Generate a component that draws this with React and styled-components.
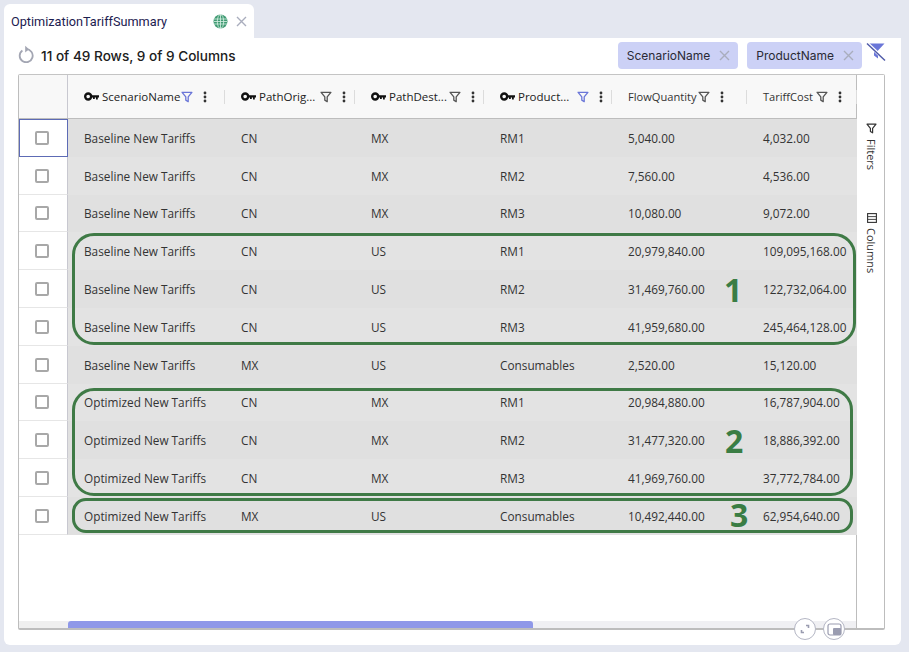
import React from "react";
import styled, { createGlobalStyle } from "styled-components";

const Global = createGlobalStyle`
    html, body {
        margin: 0;
        padding: 0;
        background: #e4e7f0;
    }
    * {
        box-sizing: border-box;
    }
`;

const Page = styled.div`
    width: 909px;
    height: 652px;
    padding: 4px 8px 7px 4px;
    display: flex;
    flex-direction: column;
    overflow: hidden;
    font-family: "Open Sans", sans-serif;
`;

const TabBar = styled.div`
    display: flex;
    height: 34px;
`;

const Tab = styled.div`
    width: 250px;
    background: #fff;
    border-radius: 6px 6px 0 0;
    display: flex;
    align-items: center;
    padding: 0 7px;
    font-family: Roboto, sans-serif;
    font-size: 12.7px;
    color: #1c2050;
`;

const TabTitle = styled.span`
    flex: 1;
`;

const TabClose = styled.span`
    display: flex;
    margin-left: 8px;
`;

const Panel = styled.div`
    flex: 1;
    background: #fff;
    border-radius: 0 0 6px 6px;
    padding: 0 16px 15px 14px;
    display: flex;
    flex-direction: column;
`;

const Toolbar = styled.div`
    height: 36px;
    padding-bottom: 1px;
    display: flex;
    align-items: center;
`;

const RefreshIcon = styled.span`
    display: flex;
    margin-top: -4px;
`;

const RowCount = styled.span`
    font-family: Inter, sans-serif;
    font-weight: 500;
    font-size: 13.6px;
    color: #202020;
    margin-left: 7px;
    flex: 1;
`;

const Chip = styled.div`
    height: 27px;
    margin-right: 9px;
    padding: 0 8px 0 9px;
    border-radius: 4px;
    background: #ccd1f6;
    display: flex;
    align-items: center;
    gap: 9px;
    font-family: Inter, sans-serif;
    font-size: 12px;
    color: #2a2a35;
`;

const ClearFilter = styled.span`
    display: flex;
    margin: -7px -1px 0 -5px;
`;

const Grid = styled.div`
    position: relative;
    flex: 1;
    display: flex;
    border: 1px solid #bdbdbd;
    border-top-color: #c4c4c4;
    border-bottom-width: 2px;
    border-radius: 2px;
`;

const Main = styled.div`
    position: relative;
    flex: 1;
    display: flex;
    flex-direction: column;
    min-width: 0;
`;

const HeaderRow = styled.div`
    display: grid;
    grid-template-columns: ${(p) => p.$cols};
    height: 44px;
    flex: none;
    background: #f8f8f8;
    border-bottom: 1px solid #bdbdbd;
`;

const CornerCell = styled.div`
    border-right: 1px solid #c8c8d0;
`;

const HeaderCell = styled.div`
    display: flex;
    align-items: center;
    padding-left: 16px;
    position: relative;
    font-family: "Open Sans", sans-serif;
    font-size: ${(p) => (p.$keyed ? "11.5px" : "11.1px")};
    font-weight: ${(p) => (p.$keyed ? 500 : 400)};
    color: ${(p) => (p.$keyed ? "#222" : "#333")};
    white-space: nowrap;
`;

const HeaderLabel = styled.span`
    margin-left: ${(p) => (p.$keyed ? "3px" : "0")};
    width: ${(p) => p.$w}px;
    flex: none;
`;

const HeaderIcon = styled.span`
    display: flex;
    flex: none;
    margin-left: ${(p) => p.$gap || 0}px;
`;

const Resize = styled.span`
    position: absolute;
    right: 0;
    top: 15px;
    height: 14px;
    width: 1px;
    background: #dcdcdc;
`;

const Row = styled.div`
    display: grid;
    grid-template-columns: ${(p) => p.$cols};
    height: 37.8px;
    flex: none;
`;

const CheckCell = styled.div`
    display: flex;
    align-items: center;
    justify-content: center;
    padding: 1px 2px 0 0;
    border-right: 1px solid #c8c8d0;
    border-bottom: 1px solid #e6e6e6;
    background: #fff;
    outline: ${(p) => (p.$focus ? "1px solid #5d6bb5" : "none")};
    outline-offset: -1px;
`;

const Check = styled.span`
    width: 14px;
    height: 14px;
    border: 2px solid #a8a8a8;
    border-radius: 2px;
    background: #fff;
`;

const Cell = styled.div`
    display: flex;
    align-items: center;
    padding-left: 16px;
    background: ${(p) => (p.$odd ? "#e3e3e3" : "#e0e0e0")};
    font-size: 11.8px;
    color: #333;
    white-space: nowrap;
`;

const Spacer = styled.div`
    flex: 1;
`;

const ScrollBar = styled.div`
    height: 7px;
    flex: none;
    display: flex;
    background: #f0f0f3;
`;

const ScrollPin = styled.div`
    width: 49px;
    background: #efefef;
`;

const ScrollThumb = styled.div`
    width: 465px;
    background: #8f98e8;
    border-radius: 3px 3px 0 0;
`;

const SidePanel = styled.div`
    width: 28px;
    border-left: 1px solid #bdbdbd;
    background: #fff;
    display: flex;
    flex-direction: column;
    align-items: center;
    padding: 48px 0 0 2px;
    gap: 43px;
`;

const SideButton = styled.div`
    writing-mode: vertical-rl;
    display: flex;
    align-items: center;
    gap: 5px;
    font-size: 11px;
    color: #333;
`;

const Callout = styled.div`
    position: absolute;
    left: ${(p) => p.$x}px;
    top: ${(p) => p.$y}px;
    width: ${(p) => p.$w}px;
    height: ${(p) => p.$h}px;
    border: 3px solid #3f7a46;
    border-radius: ${(p) => p.$r}px;
    pointer-events: none;
`;

const CalloutNumber = styled.span`
    position: absolute;
    left: ${(p) => p.$x}px;
    top: ${(p) => p.$y}px;
    font-family: "Open Sans", sans-serif;
    font-weight: 700;
    font-size: 32px;
    line-height: 36px;
    color: #3a7d44;
`;

const RoundButton = styled.span`
    position: absolute;
    left: ${(p) => p.$x}px;
    top: 543px;
    width: 22px;
    height: 22px;
    border-radius: 50%;
    border: 1.5px solid #b4b6c4;
    background: #fff;
    display: flex;
    align-items: center;
    justify-content: center;
`;

const Key = () => (
    <svg width="15" height="9" viewBox="0 0 15 9">
        <circle cx="4.2" cy="4.5" r="3" fill="none" stroke="#111" strokeWidth="2.4" />
        <path d="M7 3.3h8v2.2h-1.2v2h-1.8v-2h-1.2v1.5H9V5.5H7z" fill="#111" />
    </svg>
);

const Funnel = ({ color = "#555", size = 12 }) => (
    <svg width={size} height={size} viewBox="0 0 11 11">
        <path d="M1 1.2h9L6.6 5.4v4.4L4.4 8.4v-3z" fill="none" stroke={color} strokeWidth="1.2" strokeLinejoin="round" />
    </svg>
);

const Dots = () => (
    <svg width="4" height="12" viewBox="0 0 4 12">
        <circle cx="2" cy="2" r="1.4" fill="#333" />
        <circle cx="2" cy="6" r="1.4" fill="#333" />
        <circle cx="2" cy="10" r="1.4" fill="#333" />
    </svg>
);

const Cross = ({ size = 11, color = "#a9adbd" }) => (
    <svg width={size} height={size} viewBox="0 0 11 11">
        <path d="M1 1l9 9M10 1l-9 9" stroke={color} strokeWidth="1.4" fill="none" />
    </svg>
);

const Globe = () => (
    <svg width="15" height="15" viewBox="0 0 15 15">
        <circle cx="7.5" cy="7.5" r="7" fill="#3f9a72" />
        <g stroke="#d8f0e4" strokeWidth="0.8" fill="none">
            <path d="M1 5h13M1 7.5h13M1 10h13" />
            <ellipse cx="7.5" cy="7.5" rx="3.2" ry="7" />
            <path d="M7.5 .5v14" />
        </g>
    </svg>
);

const Refresh = () => (
    <svg width="16" height="18" viewBox="0 0 16 18">
        <path d="M4.4 5.4A6.5 6.5 0 1 0 8 4.2" fill="none" stroke="#a3a6b3" strokeWidth="1.8" />
        <path d="M7.2 .8L11 4.2L7.2 7.4z" fill="#a3a6b3" />
    </svg>
);

const FilterOff = () => (
    <svg width="20" height="20" viewBox="0 0 20 20">
        <path d="M1.5 1.5h17L12 8.5v8l-4-3v-5z" fill="#6a76d8" />
        <path d="M1 1l18 17" stroke="#fff" strokeWidth="3.2" />
        <path d="M1 1.5l18 17" stroke="#4f5aa8" strokeWidth="1.5" />
    </svg>
);

const ColumnsIcon = () => (
    <svg width="10" height="10" viewBox="0 0 10 10">
        <rect x="0.6" y="0.6" width="8.8" height="8.8" fill="none" stroke="#333" strokeWidth="1.1" />
        <path d="M0.6 3.6h8.8M0.6 6.4h8.8" stroke="#333" strokeWidth="0.9" />
    </svg>
);

const COLS = "49px 157px 130px 129px 128px 135px 110px";

const headers = [
    { label: "ScenarioName", keyed: true, w: 77, active: true, fGap: 2, dGap: 10 },
    { label: "PathOrig...", keyed: true, w: 58, fGap: 3, dGap: 10 },
    { label: "PathDest...", keyed: true, w: 58, fGap: 2, dGap: 10 },
    { label: "Product...", keyed: true, w: 53, active: true, fGap: 6, dGap: 10 },
    { label: "FlowQuantity", w: 68, fGap: 2, dGap: 10 },
    { label: "TariffCost", w: 52, fGap: 1, dGap: 10 },
];

const B = "Baseline New Tariffs";
const O = "Optimized New Tariffs";

const rows = [
    [B, "CN", "MX", "RM1", "5,040.00", "4,032.00"],
    [B, "CN", "MX", "RM2", "7,560.00", "4,536.00"],
    [B, "CN", "MX", "RM3", "10,080.00", "9,072.00"],
    [B, "CN", "US", "RM1", "20,979,840.00", "109,095,168.00"],
    [B, "CN", "US", "RM2", "31,469,760.00", "122,732,064.00"],
    [B, "CN", "US", "RM3", "41,959,680.00", "245,464,128.00"],
    [B, "MX", "US", "Consumables", "2,520.00", "15,120.00"],
    [O, "CN", "MX", "RM1", "20,984,880.00", "16,787,904.00"],
    [O, "CN", "MX", "RM2", "31,477,320.00", "18,886,392.00"],
    [O, "CN", "MX", "RM3", "41,969,760.00", "37,772,784.00"],
    [O, "MX", "US", "Consumables", "10,492,440.00", "62,954,640.00"],
];

export default function App() {
    return (
        <>
            <Global />
            <Page>
                <TabBar>
                    <Tab>
                        <TabTitle>OptimizationTariffSummary</TabTitle>
                        <Globe />
                        <TabClose><Cross /></TabClose>
                    </Tab>
                </TabBar>
                <Panel>
                    <Toolbar>
                        <RefreshIcon><Refresh /></RefreshIcon>
                        <RowCount>11 of 49 Rows, 9 of 9 Columns</RowCount>
                        <Chip>ScenarioName <Cross /></Chip>
                        <Chip>ProductName <Cross /></Chip>
                        <ClearFilter><FilterOff /></ClearFilter>
                    </Toolbar>
                    <Grid>
                        <Main>
                            <HeaderRow $cols={COLS}>
                                <CornerCell />
                                {headers.map((h) => (
                                    <HeaderCell key={h.label} $keyed={h.keyed}>
                                        {h.keyed && <Key />}
                                        <HeaderLabel $keyed={h.keyed} $w={h.w}>{h.label}</HeaderLabel>
                                        <HeaderIcon $gap={h.fGap}>
                                            <Funnel color={h.active ? "#6a76d8" : "#555"} />
                                        </HeaderIcon>
                                        <HeaderIcon $gap={h.dGap}><Dots /></HeaderIcon>
                                        <Resize />
                                    </HeaderCell>
                                ))}
                            </HeaderRow>
                            {rows.map((r, i) => (
                                <Row key={i} $cols={COLS}>
                                    <CheckCell $focus={i === 0}><Check /></CheckCell>
                                    {r.map((v, j) => (
                                        <Cell key={j} $odd={i % 2 === 1}>{v}</Cell>
                                    ))}
                                </Row>
                            ))}
                            <Spacer />
                            <ScrollBar>
                                <ScrollPin />
                                <ScrollThumb />
                            </ScrollBar>
                            <Callout $x={53} $y={158} $w={784} $h={112} $r={22} />
                            <CalloutNumber $x={705} $y={197}>1</CalloutNumber>
                            <Callout $x={53} $y={313} $w={781} $h={108} $r={22} />
                            <CalloutNumber $x={706} $y={348}>2</CalloutNumber>
                            <Callout $x={53} $y={423} $w={781} $h={35} $r={14} />
                            <CalloutNumber $x={711} $y={422}>3</CalloutNumber>
                            <RoundButton $x={775}>
                                <svg width="12" height="12" viewBox="0 0 12 12">
                                    <path d="M7 2.5h2.5V5M5 9.5H2.5V7" fill="none" stroke="#9a9cb0" strokeWidth="1.6" />
                                </svg>
                            </RoundButton>
                            <RoundButton $x={804}>
                                <svg width="15" height="13" viewBox="0 0 15 13">
                                    <rect x="1" y="1" width="13" height="11" rx="2" fill="none" stroke="#9a9cb0" strokeWidth="1.2" />
                                    <rect x="6" y="5" width="8" height="7" rx="1" fill="#9a9cb0" />
                                </svg>
                            </RoundButton>
                        </Main>
                        <SidePanel>
                            <SideButton><Funnel color="#333" size={11} />Filters</SideButton>
                            <SideButton><ColumnsIcon />Columns</SideButton>
                        </SidePanel>
                    </Grid>
                </Panel>
            </Page>
        </>
    );
}
